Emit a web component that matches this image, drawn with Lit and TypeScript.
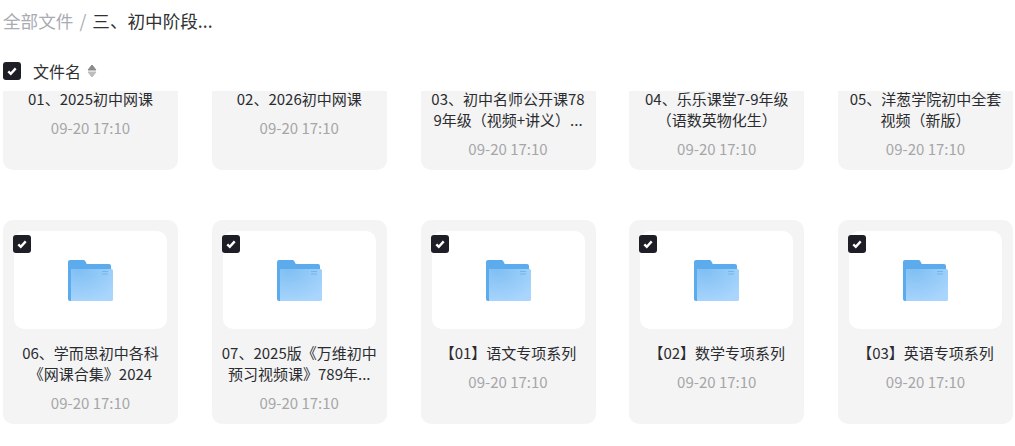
import { LitElement, html, css, svg } from "lit";
import { customElement } from "lit/decorators.js";

const row1 = [
  "01、2025初中网课",
  "02、2026初中网课",
  "03、初中名师公开课789年级（视频+讲义）...",
  "04、乐乐课堂7-9年级（语数英物化生）",
  "05、洋葱学院初中全套视频（新版）",
];
const row2 = [
  "06、学而思初中各科《网课合集》2024",
  "07、2025版《万维初中预习视频课》789年...",
  "【01】语文专项系列",
  "【02】数学专项系列",
  "【03】英语专项系列",
];

const check = svg`<svg viewBox="0 0 18 18" width="18" height="18"><path d="M5.300 9.300l2.500 2.500 4.900-5.400" fill="none" stroke="#fff" stroke-width="2.400"/></svg>`;

const folder = svg`<svg viewBox="0 0 45 41" width="45" height="41">
  <defs><radialGradient id="g" cx="0.2" cy="0" r="1.1">
    <stop offset="0" stop-color="#7fbff2"/><stop offset="1" stop-color="#aad6fd"/>
  </radialGradient></defs>
  <path d="M0 2a2 2 0 0 1 2-2h13.500a2 2 0 0 1 1.700 1l1.300 2.600a1 1 0 0 0 .9.500H41a2 2 0 0 1 2 2V41H2a2 2 0 0 1-2-2z" fill="#5cabed"/>
  <path d="M3 9h40.500a1.500 1.500 0 0 1 1.500 1.500V39.500a1.500 1.500 0 0 1-1.500 1.500H3z" fill="url(#g)"/>
  <path d="M34 11.500h6M34 14h6" stroke="#72b6f0" stroke-width="1"/>
</svg>`;

@customElement("app-root")
export class AppRoot extends LitElement {
  static styles = css`
    :host {
      display: flex;
      flex-direction: column;
      height: 446px;
      overflow: hidden;
      background: #fff;
      font-family: "Noto Sans CJK SC", "Noto Sans", sans-serif;
    }
    .crumbs {
      display: flex;
      align-items: center;
      height: 40px;
      padding-left: 3px;
      font-size: 17.6px;
      color: #a8abb2;
    }
    .sep { margin: 0 6px; }
    .current { color: #303133; }
    .head {
      display: flex;
      align-items: center;
      height: 40px;
      padding: 11px 0 0 3px;
      font-size: 16px;
      color: #303133;
    }
    .head .name { margin-left: 12px; }
    .sort { margin-left: 6px; display: block; }
    .box {
      width: 18px;
      height: 18px;
      border-radius: 3px;
      background: #1d1e26;
      display: block;
      flex: none;
    }
    .box svg { display: block; }
    .scroll { flex: 1; min-height: 0; overflow: hidden; }
    .grid {
      display: grid;
      grid-template-columns: repeat(5, 175px);
      column-gap: 33.75px;
      row-gap: 50px;
      margin: -125px 0 0 3px;
    }
    .card {
      position: relative;
      height: 204px;
      box-sizing: border-box;
      padding: 11px;
      background: #f4f4f4;
      border-radius: 10px;
      text-align: center;
    }
    .card .box { position: absolute; left: 10px; top: 15px; }
    .thumb {
      height: 98px;
      background: #fff;
      border-radius: 10px;
      display: flex;
      align-items: center;
      justify-content: center;
    }
    .title {
      margin: 13px -2px 0;
      font-size: 15px;
      line-height: 21px;
      color: #2b2c30;
      word-break: break-all;
    }
    .time {
      margin-top: 8px;
      font-size: 15px;
      line-height: 21px;
      color: #a6a6a8;
    }
  `;

  private card(title: string) {
    return html`<div class="card">
      <div class="thumb">${folder}</div>
      <span class="box">${check}</span>
      <div class="title">${title}</div>
      <div class="time">09-20 17:10</div>
    </div>`;
  }

  render() {
    return html`
      <div class="crumbs">
        <span>全部文件</span><span class="sep">/</span><span class="current">三、初中阶段...</span>
      </div>
      <div class="head">
        <span class="box">${check}</span>
        <span class="name">文件名</span>
        <svg class="sort" width="10" height="14" viewBox="0 0 10 14">
          <path d="M5 1L9 6H1z" fill="#8a8a8a" stroke="#8a8a8a" stroke-linejoin="round"/>
          <path d="M5 13L9 8H1z" fill="#bdbdbd" stroke="#bdbdbd" stroke-linejoin="round"/>
        </svg>
      </div>
      <div class="scroll">
        <div class="grid">${[...row1, ...row2].map((t) => this.card(t))}</div>
      </div>
    `;
  }
}
